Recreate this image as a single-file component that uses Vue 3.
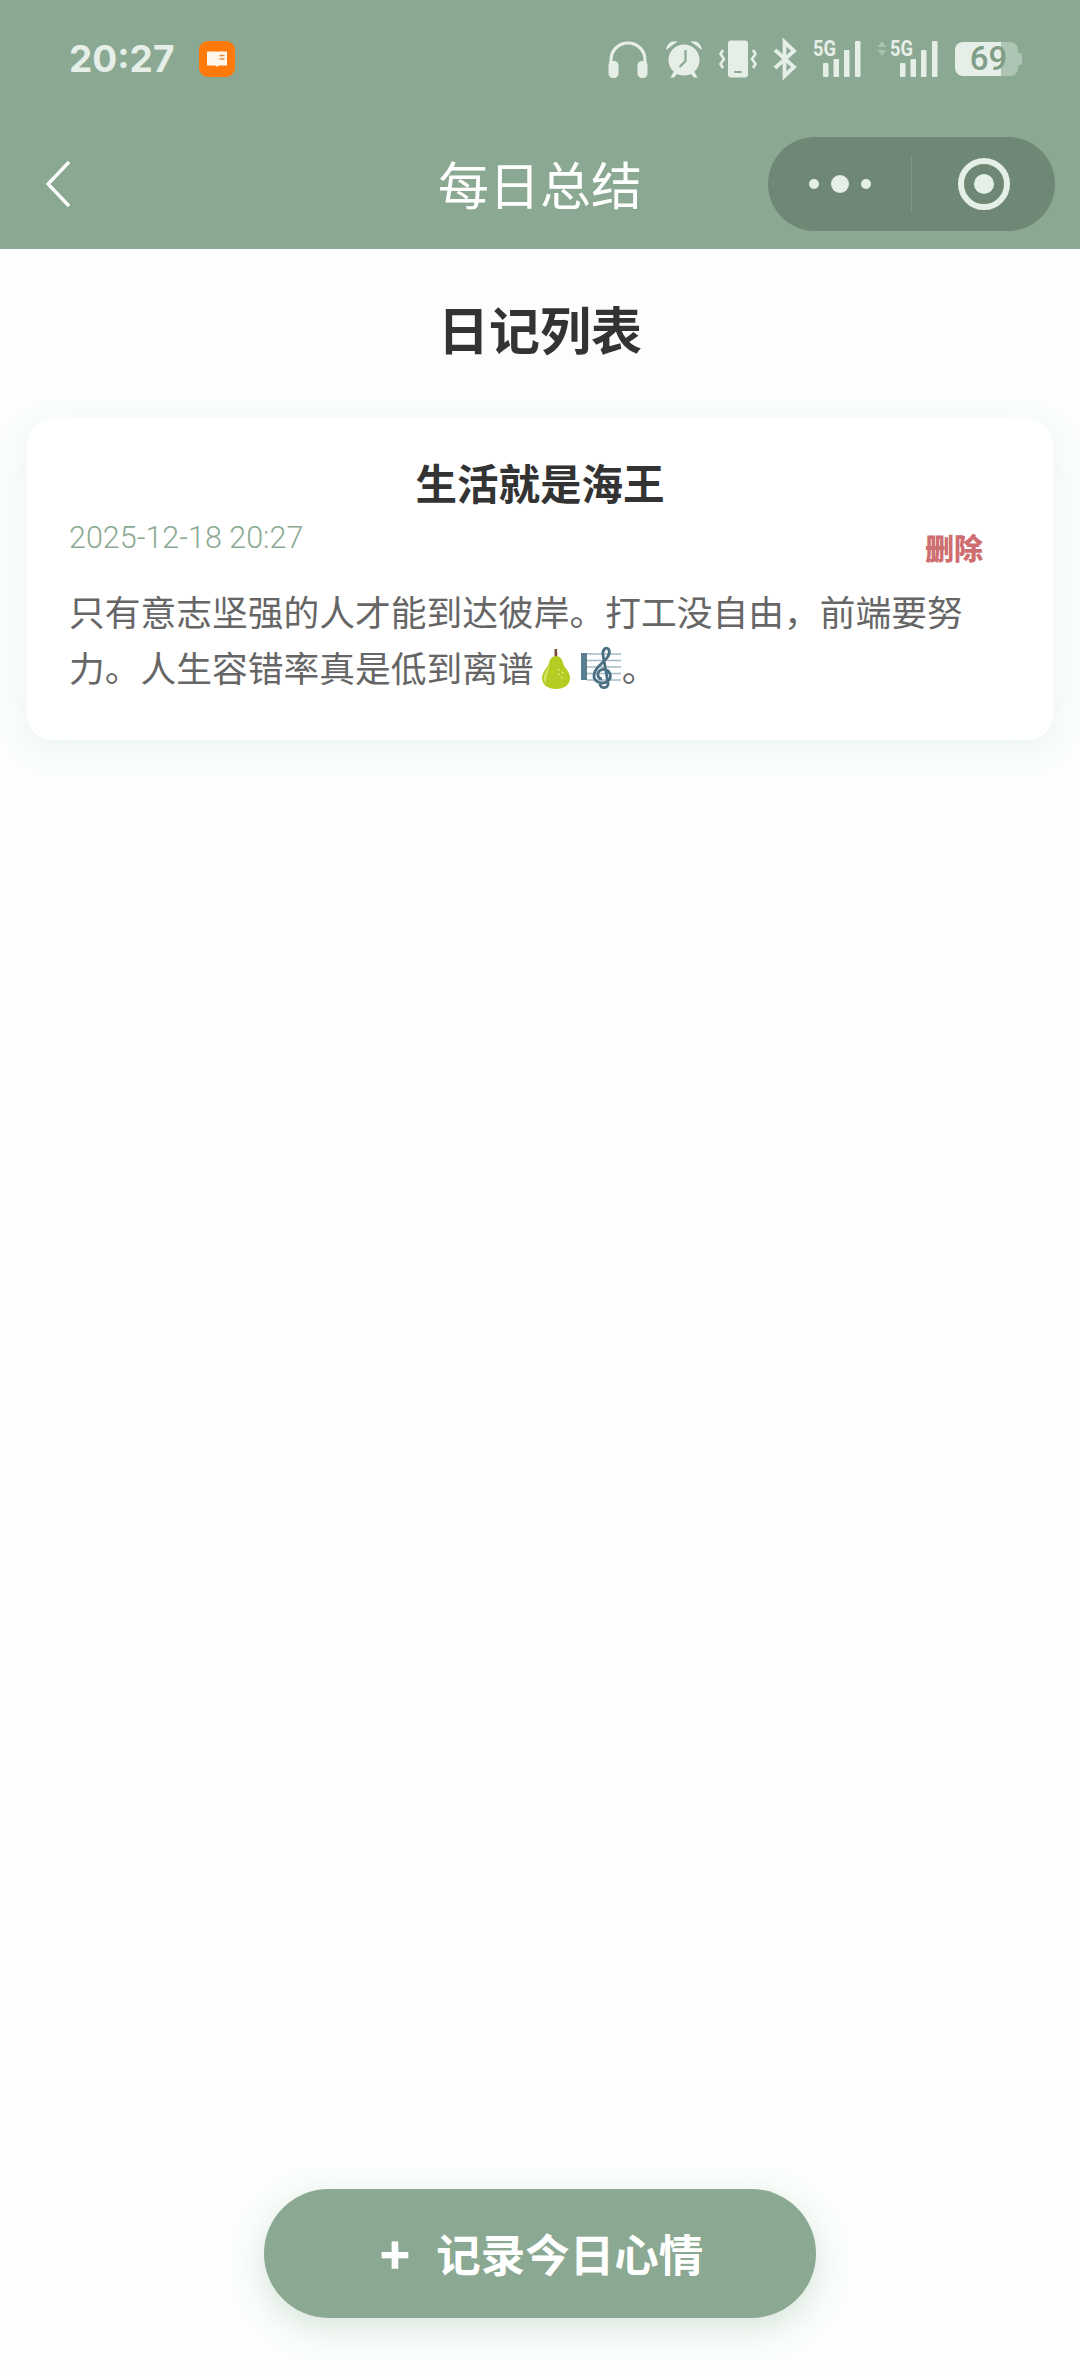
<script setup>
const title = '每日总结'
const note = {
  title: '生活就是海王',
  date: '2025-12-18 20:27',
  line: '只有意志坚强的人才能到达彼岸。打工没自由，前端要努力。人生容错率真是低到离谱'
}
const bars = [
  { x: 10, y: 23, h: 14 },
  { x: 20.5, y: 19, h: 18 },
  { x: 31, y: 10, h: 27 },
  { x: 42, y: 1, h: 36 }
]
</script>

<template>
  <div class="page">
    <header class="top">
      <div class="status">
        <div class="status-left">
          <span class="time">20:27</span>
          <svg class="badge" width="36" height="36" viewBox="0 0 36 36">
            <rect width="36" height="36" rx="9" fill="#FF7A0A" />
            <path d="M8 10.500h9.500l.5.600.5-.600H28v14h-8l-2 1.200-2-1.200H8z" fill="#FFF6EC" />
            <path d="M20.500 14.500h5M20.500 18h5" stroke="#F08A30" stroke-width="1.500" />
          </svg>
        </div>
        <div class="status-right">
          <svg width="42" height="38" viewBox="0 0 42 38">
            <path d="M4 26V20a17 17 0 0 1 34 0v6" fill="none" stroke="#E6EEE8" stroke-width="3.200" />
            <rect x="1.500" y="21" width="10" height="17" rx="4.500" fill="#E6EEE8" />
            <rect x="30.500" y="21" width="10" height="17" rx="4.500" fill="#E6EEE8" />
          </svg>
          <svg width="38" height="38" viewBox="0 0 38 38">
            <circle cx="19" cy="20" r="15.500" fill="#E6EEE8" />
            <path d="M1 10C1.500 3.500 7 0 12.500 1.500zM37 10C36.500 3.500 31 0 25.500 1.500z" fill="#E6EEE8" />
            <path d="M9 31l-3.500 6.500h3.500L13 33zM29 31l3.500 6.500H29L25 33z" fill="#E6EEE8" />
            <path d="M20.500 10v11l-6 6" fill="none" stroke="#8BA992" stroke-width="2.200" />
          </svg>
          <svg width="38" height="38" viewBox="0 0 38 38">
            <rect x="9" y="0.500" width="20" height="37" rx="3" fill="#E6EEE8" />
            <rect x="15" y="31" width="8" height="2" rx="1" fill="#8BA992" />
            <path d="M4 10L1.500 14l3.500 5-3.500 5 2.500 4M34 10l2.500 4-3.500 5 3.500 5-2.500 4" fill="none" stroke="#E6EEE8" stroke-width="2.600" />
          </svg>
          <svg width="24" height="38" viewBox="0 0 24 38">
            <path d="M2 10l19 17-9.500 9V2L21 11 2 28" fill="none" stroke="#E6EEE8" stroke-width="3.800" />
          </svg>
          <svg class="sig" width="48" height="38" viewBox="0 0 48 38">
            <text x="0" y="16" class="five" textLength="23" lengthAdjust="spacingAndGlyphs">5G</text>
            <rect v-for="b in bars" :key="b.x" :x="b.x" :y="b.y" width="5.500" :height="b.h" rx="1" fill="#E6EEE8" />
          </svg>
          <svg width="62" height="38" viewBox="0 0 62 38">
            <path d="M5 1l4.500 6h-9zM5 16L.5 10h9z" fill="#E6EEE8" opacity=".35" />
            <text x="13" y="16" class="five" textLength="23" lengthAdjust="spacingAndGlyphs">5G</text>
            <rect v-for="b in bars" :key="b.x" :x="b.x + 13" :y="b.y" width="5.500" :height="b.h" rx="1" fill="#E6EEE8" />
          </svg>
          <div class="battery">
            <span class="level">69</span>
            <i class="tip"></i>
          </div>
        </div>
      </div>
      <nav class="nav">
        <svg class="back" width="24" height="46" viewBox="0 0 24 46">
          <path d="M23 1L2 23l21 22" fill="none" stroke="#fff" stroke-width="3.400" />
        </svg>
        <h1 class="nav-title">{{ title }}</h1>
        <div class="capsule">
          <div class="more">
            <i class="dot"></i><i class="dot big"></i><i class="dot"></i>
          </div>
          <i class="divider"></i>
          <div class="close">
            <i class="ring"></i>
          </div>
        </div>
      </nav>
    </header>

    <h2 class="heading">日记列表</h2>

    <article class="card">
      <h3 class="card-title">{{ note.title }}</h3>
      <div class="body">
        <div class="meta">
          <span class="date">{{ note.date }}</span>
          <span class="delete">删除</span>
        </div>
        <p class="text">{{ note.line }}<svg class="emoji" width="42" height="44" viewBox="0 0 42 44">
            <path d="M20.500 3h2.500l.5 11h-3z" fill="#7A4B3A" />
            <path d="M22 10c-4 0-6 3-7 7-1 5-7 8-7 15 0 7 6 11 14 11s14-4 14-11c0-7-6-10-7-15-1-4-3-7-7-7z" fill="#B6CC22" />
            <path d="M17 15c-1 6-6 9-7 16-.5 3 .5 5 2 6.500 0-8 3-14 5-22.500z" fill="#D3E26B" />
            <path d="M24 23l1.500 1M28 26l1.500 1M24 28l1.500 1M27 31l1.500 1" stroke="#E2EC96" stroke-width="1.500" />
          </svg><svg class="emoji" width="46" height="44" viewBox="0 0 46 44">
            <rect x="5" y="7" width="6" height="27" fill="#5A7F91" />
            <path d="M11 8h34M11 14.500h34M11 21h34M11 27.500h34M11 34h34" stroke="#A3BAC5" stroke-width="1.300" />
            <path d="M32 37C33 43 24 43 24 38M32 37L27 9C26 3 31 0 33 4C35 10 28 15 23 20C17 26 16 33 22 36C29 39 36 34 34 28C32 22 24 22 22 27C21 31 24 33 26 33" fill="none" stroke="#4A6F82" stroke-width="2.800" />
          </svg>。</p>
      </div>
    </article>

    <button class="fab">
      <span class="plus">+</span>
      <span>记录今日心情</span>
    </button>
  </div>
</template>

<style scoped>
.page {
  width: 1080px;
  height: 2376px;
  display: flex;
  flex-direction: column;
  background: #fbfefc;
  font-family: "Noto Sans CJK SC", "Noto Sans", sans-serif;
  overflow: hidden;
}
.top {
  height: 249px;
  background: #8ba992;
  flex: none;
}
.status {
  height: 118px;
  display: flex;
  align-items: center;
  justify-content: space-between;
  padding: 0 58px 0 69px;
  box-sizing: border-box;
}
.status-left {
  display: flex;
  align-items: center;
  gap: 25px;
}
.time {
  font-family: Inter, sans-serif;
  font-weight: 700;
  font-size: 37px;
  line-height: 44px;
  color: #e6eee8;
}
.badge {
  display: block;
}
.status-right {
  display: flex;
  align-items: center;
  gap: 16px;
}
.status-right svg {
  display: block;
  overflow: visible;
}
.five {
  font-family: Roboto, sans-serif;
  font-size: 22px;
  font-weight: 700;
  fill: #e6eee8;
}
.battery {
  position: relative;
  width: 63px;
  height: 34px;
  margin-right: 4px;
  border-radius: 8px;
  background: linear-gradient(90deg, #e6eee8 0 46px, #aec5b3 46px);
  display: flex;
  align-items: center;
  justify-content: center;
}
.level {
  font-family: Roboto, sans-serif;
  font-size: 33px;
  font-weight: 500;
  line-height: 34px;
  color: #7f9d87;
  padding-left: 4px;
}
.tip {
  position: absolute;
  right: -4px;
  top: 11px;
  width: 4px;
  height: 12px;
  border-radius: 0 3px 3px 0;
  background: #aec5b3;
}
.nav {
  position: relative;
  height: 131px;
  display: flex;
  align-items: center;
  padding: 0 25px 0 46px;
}
.back {
  display: block;
  flex: none;
}
.nav-title {
  position: absolute;
  left: 0;
  right: 0;
  margin: -2px 0 0;
  text-align: center;
  font-size: 51px;
  font-weight: 400;
  line-height: 70px;
  color: #fff;
}
.capsule {
  margin-left: auto;
  width: 287px;
  height: 94px;
  border-radius: 47px;
  background: #6f8875;
  display: flex;
  align-items: center;
  position: relative;
}
.more {
  width: 143px;
  display: flex;
  align-items: center;
  justify-content: center;
  gap: 12px;
}
.dot {
  width: 10px;
  height: 10px;
  border-radius: 50%;
  background: #e6eee8;
}
.dot.big {
  width: 18px;
  height: 18px;
}
.divider {
  width: 1px;
  height: 56px;
  background: #7f9785;
}
.close {
  flex: 1;
  display: flex;
  justify-content: center;
}
.ring {
  width: 52px;
  height: 52px;
  box-sizing: border-box;
  border: 6px solid #e6eee8;
  border-radius: 50%;
  display: flex;
  align-items: center;
  justify-content: center;
}
.ring::after {
  content: "";
  width: 20px;
  height: 20px;
  border-radius: 50%;
  background: #e6eee8;
}
.heading {
  margin: 44px 0 56px;
  text-align: center;
  font-size: 51px;
  font-weight: 700;
  line-height: 70px;
  color: #333;
}
.card {
  margin: 0 27px;
  padding: 34px 42px 45px;
  border-radius: 26px;
  background: #fff;
  box-shadow: 0 8px 30px rgba(139, 169, 146, 0.12);
}
.card-title {
  margin: 0;
  text-align: center;
  font-size: 41.5px;
  font-weight: 700;
  line-height: 58px;
  color: #333;
}
.body {
  padding-right: 28px;
}
.meta {
  display: flex;
  justify-content: space-between;
  align-items: flex-start;
  height: 72px;
}
.date {
  font-family: Roboto, sans-serif;
  font-size: 30.500px;
  font-weight: 300;
  line-height: 54px;
  color: #8ba992;
}
.delete {
  margin-top: 16px;
  font-size: 29px;
  font-weight: 900;
  line-height: 40px;
  color: #cf6e70;
}
.text {
  margin: 0;
  font-size: 35.750px;
  line-height: 56px;
  color: #666;
}
.emoji {
  vertical-align: -8px;
}
.fab {
  align-self: center;
  margin-top: auto;
  margin-bottom: 58px;
  width: 552px;
  height: 129px;
  padding: 0 0 3px 3px;
  border: 0;
  border-radius: 65px;
  background: #8ba992;
  box-shadow: 0 10px 30px rgba(139, 169, 146, 0.3);
  color: #fff;
  font-family: inherit;
  font-size: 44.500px;
  font-weight: 700;
  display: flex;
  align-items: center;
  justify-content: center;
  gap: 26px;
}
.plus {
  font-size: 50px;
  font-weight: 900;
  line-height: 60px;
}
</style>
